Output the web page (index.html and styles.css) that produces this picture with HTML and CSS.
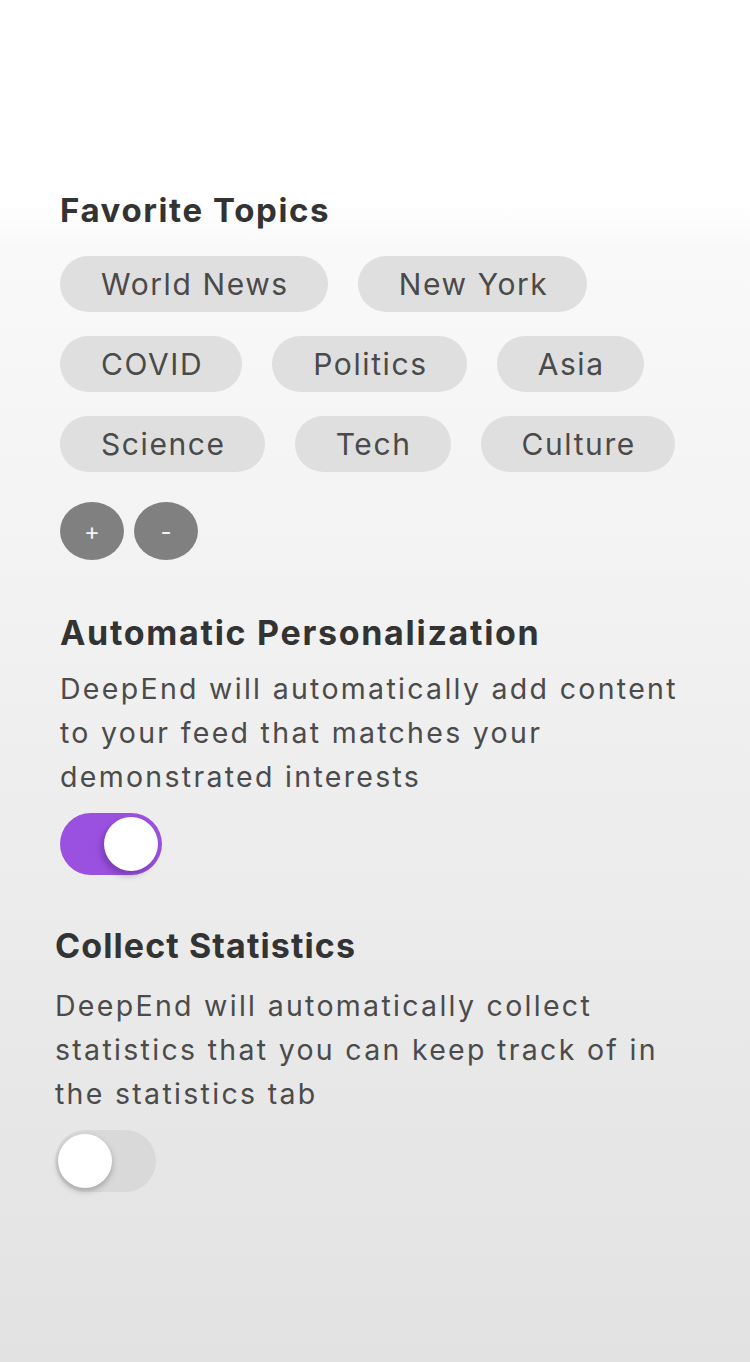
FILE: index.html
```html
<!DOCTYPE html>
<html lang="en">
<head>
<meta charset="utf-8">
<title>Settings</title>
<link rel="stylesheet" href="styles.css">
</head>
<body>
<main class="page">
  <section class="topics">
    <h2 class="title title-topics">Favorite Topics</h2>
    <div class="chips">
      <span class="chip">World News</span>
      <span class="chip">New York</span>
      <span class="chip">COVID</span>
      <span class="chip">Politics</span>
      <span class="chip">Asia</span>
      <span class="chip">Science</span>
      <span class="chip">Tech</span>
      <span class="chip">Culture</span>
    </div>
    <div class="actions">
      <button class="round-btn">+</button>
      <button class="round-btn">-</button>
    </div>
  </section>

  <section class="setting setting-personal">
    <h2 class="title">Automatic Personalization</h2>
    <p class="desc">DeepEnd will automatically add content to your feed that matches your demonstrated interests</p>
    <div class="toggle on"><span class="knob"></span></div>
  </section>

  <section class="setting setting-stats">
    <h2 class="title">Collect Statistics</h2>
    <p class="desc">DeepEnd will automatically collect statistics that you can keep track of in the statistics tab</p>
    <div class="toggle off"><span class="knob"></span></div>
  </section>
</main>
</body>
</html>
```

FILE: styles.css
```css
* { box-sizing: border-box; }
html, body { margin: 0; padding: 0; }
body {
  width: 750px;
  min-height: 1362px;
  font-family: Inter, "Open Sans", sans-serif;
  background: linear-gradient(to bottom, #ffffff 0, #ffffff 200px, #f9f9f9 250px, #e2e2e2 1362px);
  color: #333333;
}
.page {
  padding: 190px 0 0 60px;
}
.title {
  margin: 0;
  font-size: 34px;
  line-height: 42px;
  font-weight: 700;
  letter-spacing: 1.7px;
  color: #333333;
}
.title-topics {
  font-size: 33px;
  line-height: 40px;
  letter-spacing: 1.6px;
}
.setting-stats .title { letter-spacing: 1.1px; }
.chips {
  display: flex;
  flex-wrap: wrap;
  gap: 24px 30px;
  width: 690px;
  margin-top: 26px;
}
.chip {
  display: flex;
  align-items: center;
  height: 56px;
  padding: 0 39px 0 41px;
  border-radius: 28px;
  background: #dfdfdf;
  color: #4a4a4a;
  font-size: 30px;
  letter-spacing: 1.6px;
  line-height: 1;
}
.actions {
  display: flex;
  gap: 10px;
  margin-top: 30px;
}
.round-btn {
  width: 64px;
  height: 58px;
  border: none;
  border-radius: 50%;
  background: #808080;
  color: #f4f4f4;
  font-family: Inter, sans-serif;
  font-size: 24px;
  padding: 0;
}
.setting-personal { margin-top: 52px; }
.setting-stats { margin-top: 50px; margin-left: -5px; }
.desc {
  margin: 13px 0 0;
  width: 630px;
  font-size: 28.5px;
  line-height: 44px;
  letter-spacing: 2.3px;
  color: #4b4b4b;
}
.setting-stats .desc { margin-top: 17px; }
.toggle {
  position: relative;
  width: 102px;
  height: 62px;
  border-radius: 31px;
  margin-top: 14px;
}
.setting-stats .toggle { margin-top: 14px; }
.toggle.on { background: #9b51e0; }
.toggle.off { background: #d9d9d9; width: 101px; }
.knob {
  position: absolute;
  top: 4px;
  width: 54px;
  height: 54px;
  border-radius: 50%;
  background: #ffffff;
}
.toggle.on .knob {
  right: 4px;
  box-shadow: -3px 4px 6px rgba(60, 20, 100, 0.35);
}
.toggle.off .knob {
  left: 3px;
  box-shadow: 0 3px 6px rgba(0, 0, 0, 0.25);
}
```
